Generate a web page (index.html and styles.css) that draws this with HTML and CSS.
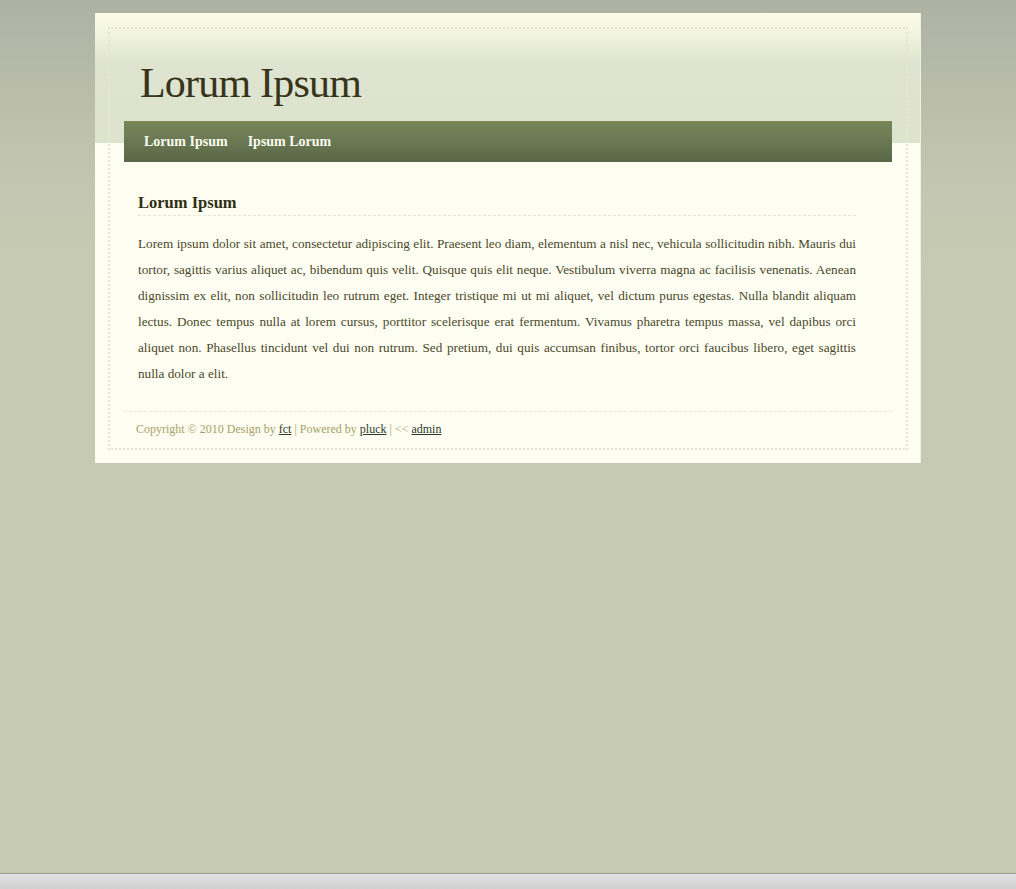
FILE: index.html
```html
<!DOCTYPE html>
<html lang="en">
<head>
<meta charset="utf-8">
<title>Lorum Ipsum</title>
<link rel="stylesheet" href="styles.css">
</head>
<body>
<div class="page">
  <div class="frame">
    <header class="header">
      <h1 class="site-title">Lorum Ipsum</h1>
    </header>
    <nav class="nav">
      <a href="#" class="nav-link">Lorum Ipsum</a>
      <a href="#" class="nav-link">Ipsum Lorum</a>
    </nav>
    <main class="content">
      <h2 class="post-title">Lorum Ipsum</h2>
      <p class="post-text">Lorem ipsum dolor sit amet, consectetur adipiscing elit. Praesent leo diam, elementum a nisl nec, vehicula sollicitudin nibh. Mauris dui tortor, sagittis varius aliquet ac, bibendum quis velit. Quisque quis elit neque. Vestibulum viverra magna ac facilisis venenatis. Aenean dignissim ex elit, non sollicitudin leo rutrum eget. Integer tristique mi ut mi aliquet, vel dictum purus egestas. Nulla blandit aliquam lectus. Donec tempus nulla at lorem cursus, porttitor scelerisque erat fermentum. Vivamus pharetra tempus massa, vel dapibus orci aliquet non. Phasellus tincidunt vel dui non rutrum. Sed pretium, dui quis accumsan finibus, tortor orci faucibus libero, eget sagittis nulla dolor a elit.</p>
    </main>
    <footer class="footer">
      <p class="footer-text">Copyright © 2010 Design by <a href="#">fct</a> | Powered by <a href="#">pluck</a> | &lt;&lt; <a href="#">admin</a></p>
    </footer>
  </div>
</div>
<div class="statusbar"></div>
</body>
</html>
```
FILE: styles.css
```css
html, body {
  margin: 0;
  padding: 0;
}
body {
  min-height: 100vh;
  background: #c7cab3 linear-gradient(to bottom, #adb2a4 0, #bdc0ab 120px, #c6c9b2 220px, #c7cab3 300px) no-repeat;
  font-family: "Liberation Serif", "DejaVu Serif", serif;
  padding-top: 13px;
  box-sizing: border-box;
}
.page {
  width: 826px;
  margin: 0 auto;
  box-sizing: border-box;
  padding: 14px 12px 13px 13px;
  background: #fdfef1 linear-gradient(to bottom, #fafce8 0, #f1f4df 22px, #dee4cf 50px, #dce3ce 130px, #fdfef1 130px) no-repeat;
  border-right: 1px solid #eef0e0;
}
.frame {
  border: 2px dotted #e9e4cf;
}
.header {
  height: 92px;
  box-sizing: border-box;
  padding: 29px 0 0 30px;
}
.site-title {
  margin: 0;
  font-family: "Liberation Serif", serif;
  font-weight: normal;
  font-size: 42px;
  line-height: 50px;
  letter-spacing: -0.8px;
  color: #38341b;
}
.nav {
  margin: 0 14px 0 14px;
  height: 41px;
  box-sizing: border-box;
  border-top: 1px solid #7e8654;
  background: linear-gradient(to bottom, #758558 0, #6f7e56 30%, #5a6647 100%);
  display: flex;
  align-items: center;
  gap: 20px;
  padding: 0 0 0 20px;
}
.nav-link {
  color: #fbfcf0;
  font-weight: bold;
  font-size: 14px;
  text-decoration: none;
}
.content {
  padding: 30px 50px 0 28px;
}
.post-title {
  margin: 0;
  font-size: 16.5px;
  line-height: 22px;
  font-weight: bold;
  color: #302d14;
  padding-bottom: 1px;
  border-bottom: 1px dashed #e9e7d2;
}
.post-text {
  margin: 15px 0 0;
  font-size: 13.2px;
  line-height: 26px;
  text-align: justify;
  color: #4a472a;
}
.footer {
  margin: 24px 14px 0 14px;
  border-top: 1px dashed #ebe7d2;
  padding: 9px 0 11px 12px;
}
.footer-text {
  margin: 0;
  font-size: 12px;
  line-height: 16px;
  color: #a89f69;
}
.footer-text a {
  color: #2f3a2c;
  text-decoration: underline;
}
.statusbar {
  position: fixed;
  left: 0;
  right: 0;
  bottom: 0;
  height: 15px;
  border-top: 1px solid #9b9d93;
  background: linear-gradient(to bottom, #e2e2e2 0, #d0d0d0 100%);
}
```
